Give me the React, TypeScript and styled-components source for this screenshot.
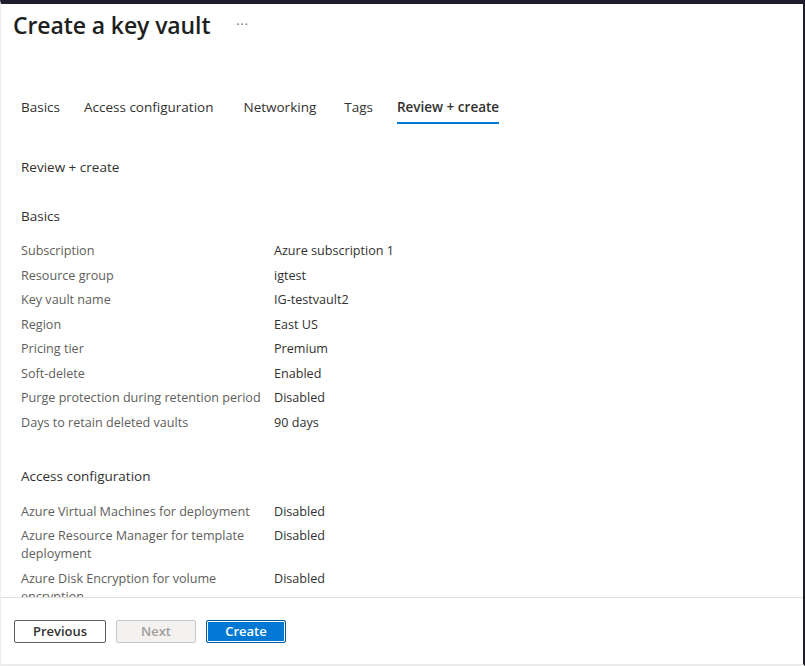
import React from "react";
import styled, { createGlobalStyle } from "styled-components";

const Global = createGlobalStyle`
  html, body { margin: 0; padding: 0; background: #fff; }
  body { font-family: "Open Sans", "Noto Sans", sans-serif; color: #323130; }
  * { box-sizing: border-box; }
`;

const Frame = styled.div`
  width: 805px;
  height: 666px;
  display: flex;
  flex-direction: column;
  background: #fff;
  border-top: 4px solid #1f1d2b;
  border-right: 2px solid #1f1d2b;
  border-bottom: 2px solid #ececec;
  border-left: 1px solid #eeeeee;
  overflow: hidden;
`;

const Header = styled.div`
  display: flex;
  align-items: center;
  gap: 26px;
  padding: 0 0 0 12px;
  height: 42px;
`;

const Title = styled.h1`
  margin: 0;
  font-size: 23px;
  font-weight: 600;
  color: #201f1e;
  letter-spacing: -0.1px;
`;

const More = styled.span`
  font-size: 12px;
  color: #605e5c;
  letter-spacing: 1px;
  margin-top: -2px;
`;

const Tabs = styled.nav`
  display: flex;
  padding: 52px 0 0 20px;
`;

const Tab = styled.div<{ $active?: boolean; $space?: number }>`
  font-size: 13.5px;
  padding: 0 0 6px;
  margin-right: ${(p) => p.$space ?? 0}px;
  color: #323130;
  font-weight: ${(p) => (p.$active ? 600 : 400)};
  border-bottom: 2px solid ${(p) => (p.$active ? "#0078d4" : "transparent")};
  white-space: nowrap;
`;

const Content = styled.div`
  flex: 1;
  overflow: hidden;
  padding: 34px 0 0 20px;
`;

const Heading = styled.div<{ $top: number }>`
  font-size: 13.5px;
  color: #323130;
  margin-top: ${(p) => p.$top}px;
  line-height: 18px;
`;

const Section = styled.div<{ $top: number }>`
  margin-top: ${(p) => p.$top}px;
  display: grid;
  grid-template-columns: 253px 1fr;
  align-items: start;
  row-gap: 6.5px;
`;

const Label = styled.div`
  font-size: 12.6px;
  line-height: 18px;
  color: #605e5c;
  width: 250px;
`;

const Value = styled.div`
  font-size: 12.6px;
  line-height: 18px;
  color: #323130;
`;

const Footer = styled.div`
  border-top: 1px solid #e1dfdd;
  height: 67px;
  display: flex;
  align-items: center;
  gap: 10px;
  padding: 0 0 0 13px;
`;

const Button = styled.button<{ $variant: "default" | "disabled" | "primary" }>`
  height: 23px;
  font-family: inherit;
  font-size: 13px;
  font-weight: 600;
  border-radius: 2px;
  padding: 0;
  display: flex;
  align-items: center;
  justify-content: center;
  width: ${(p) => (p.$variant === "default" ? 92 : 80)}px;
  background: ${(p) =>
    p.$variant === "primary" ? "#0078d4" : p.$variant === "disabled" ? "#f3f2f1" : "#fff"};
  color: ${(p) =>
    p.$variant === "primary" ? "#fff" : p.$variant === "disabled" ? "#a19f9d" : "#323130"};
  border: 1px solid
    ${(p) =>
      p.$variant === "primary" ? "#005a9e" : p.$variant === "disabled" ? "#c8c6c4" : "#605e5c"};
  box-shadow: ${(p) => (p.$variant === "primary" ? "inset 0 0 0 1px #fff" : "none")};
`;

const basics: [string, string][] = [
  ["Subscription", "Azure subscription 1"],
  ["Resource group", "igtest"],
  ["Key vault name", "IG-testvault2"],
  ["Region", "East US"],
  ["Pricing tier", "Premium"],
  ["Soft-delete", "Enabled"],
  ["Purge protection during retention period", "Disabled"],
  ["Days to retain deleted vaults", "90 days"],
];

const access: [string, string][] = [
  ["Azure Virtual Machines for deployment", "Disabled"],
  ["Azure Resource Manager for template deployment", "Disabled"],
  ["Azure Disk Encryption for volume encryption", "Disabled"],
];

export default function App() {
  return (
    <Frame>
      <Global />
      <Header>
        <Title>Create a key vault</Title>
        <More>···</More>
      </Header>
      <Tabs>
        <Tab $space={24}>Basics</Tab>
        <Tab $space={30}>Access configuration</Tab>
        <Tab $space={28}>Networking</Tab>
        <Tab $space={24}>Tags</Tab>
        <Tab $active>Review + create</Tab>
      </Tabs>
      <Content>
        <Heading $top={0}>Review + create</Heading>
        <Heading $top={31}>Basics</Heading>
        <Section $top={17}>
          {basics.map(([l, v]) => (
            <React.Fragment key={l}>
              <Label>{l}</Label>
              <Value>{v}</Value>
            </React.Fragment>
          ))}
        </Section>
        <Heading $top={35}>Access configuration</Heading>
        <Section $top={18}>
          {access.map(([l, v]) => (
            <React.Fragment key={l}>
              <Label>{l}</Label>
              <Value>{v}</Value>
            </React.Fragment>
          ))}
        </Section>
      </Content>
      <Footer>
        <Button $variant="default">Previous</Button>
        <Button $variant="disabled">Next</Button>
        <Button $variant="primary">Create</Button>
      </Footer>
    </Frame>
  );
}
